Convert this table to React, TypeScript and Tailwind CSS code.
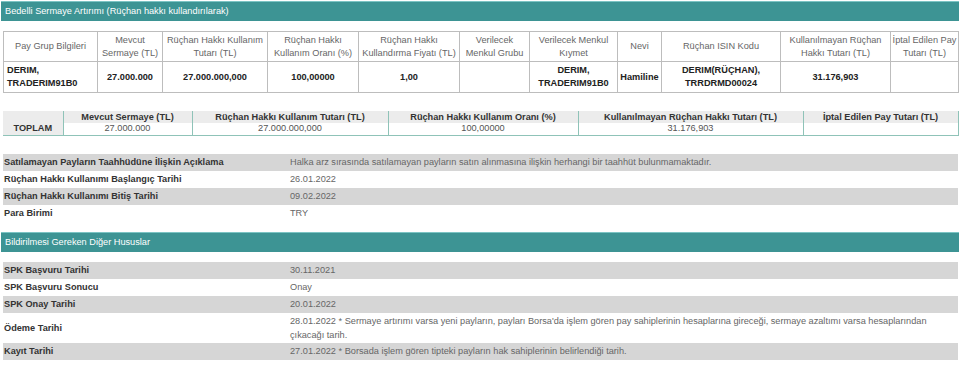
import React from 'react';

const mainHead = [
  { text: 'Pay Grup Bilgileri', w: 'w-[94px]' },
  { text: 'Mevcut Sermaye (TL)', w: 'w-[65px]' },
  { text: 'Rüçhan Hakkı Kullanım Tutarı (TL)', w: 'w-[105px]' },
  { text: 'Rüçhan Hakkı Kullanım Oranı (%)', w: 'w-[91px]' },
  { text: 'Rüçhan Hakkı Kullandırma Fiyatı (TL)', w: 'w-[101px]' },
  { text: 'Verilecek Menkul Grubu', w: 'w-[70px]' },
  { text: 'Verilecek Menkul Kıymet', w: 'w-[88px]' },
  { text: 'Nevi', w: 'w-[44px]' },
  { text: 'Rüçhan ISIN Kodu', w: 'w-[119px]' },
  { text: 'Kullanılmayan Rüçhan Hakkı Tutarı (TL)', w: 'w-[110px]' },
  { text: 'İptal Edilen Pay Tutarı (TL)', w: 'w-[68px]' },
];

const mainRow = [
  'DERIM, TRADERIM91B0',
  '27.000.000',
  '27.000.000,000',
  '100,00000',
  '1,00',
  '',
  'DERIM, TRADERIM91B0',
  'Hamiline',
  'DERIM(RÜÇHAN), TRRDRMD00024',
  '31.176,903',
  '',
];

const totals = [
  { head: 'Mevcut Sermaye (TL)', val: '27.000.000', w: 'w-[129px]' },
  { head: 'Rüçhan Hakkı Kullanım Tutarı (TL)', val: '27.000.000,000', w: 'w-[196px]' },
  { head: 'Rüçhan Hakkı Kullanım Oranı (%)', val: '100,00000', w: 'w-[190px]' },
  { head: 'Kullanılmayan Rüçhan Hakkı Tutarı (TL)', val: '31.176,903', w: 'w-[225px]' },
  { head: 'İptal Edilen Pay Tutarı (TL)', val: '', w: 'w-[155px]' },
];

const info = [
  { k: 'Satılamayan Payların Taahhüdüne İlişkin Açıklama', v: 'Halka arz sırasında satılamayan payların satın alınmasına ilişkin herhangi bir taahhüt bulunmamaktadır.' },
  { k: 'Rüçhan Hakkı Kullanımı Başlangıç Tarihi', v: '26.01.2022' },
  { k: 'Rüçhan Hakkı Kullanımı Bitiş Tarihi', v: '09.02.2022' },
  { k: 'Para Birimi', v: 'TRY' },
];

const other = [
  { k: 'SPK Başvuru Tarihi', v: '30.11.2021' },
  { k: 'SPK Başvuru Sonucu', v: 'Onay' },
  { k: 'SPK Onay Tarihi', v: '20.01.2022' },
  { k: 'Ödeme Tarihi', v: "28.01.2022 * Sermaye artırımı varsa yeni payların, payları Borsa'da işlem gören pay sahiplerinin hesaplarına gireceği, sermaye azaltımı varsa hesaplarından çıkacağı tarih." },
  { k: 'Kayıt Tarihi', v: '27.01.2022 * Borsada işlem gören tipteki payların hak sahiplerinin belirlendiği tarih.' },
];

const SectionBar = ({ title }: { title: string }) => (
  <div className="h-[20px] bg-[#3d9494] border-t border-[#7cc4c4] pl-[4px] text-[9.2px] leading-[18px] text-white">
    {title}
  </div>
);

const KeyValue = ({ rows }: { rows: { k: string; v: string }[] }) => (
  <table className="ml-[2px] w-[955px] table-fixed border-collapse text-[9.2px]">
    <colgroup>
      <col className="w-[286px]" />
      <col />
    </colgroup>
    <tbody>
      {rows.map((r, i) => (
        <tr key={r.k} className={i % 2 === 0 ? 'bg-[#d6d6d6]' : 'bg-white'}>
          <td className="h-[17px] py-[1px] pl-[1px] pr-[2px] font-bold text-[#333] leading-[14px] align-middle">{r.k}</td>
          <td className="py-[1px] pl-[1px] pr-[18px] text-[#666] leading-[14px] align-middle">{r.v}</td>
        </tr>
      ))}
    </tbody>
  </table>
);

export default function App() {
  return (
    <div className="w-[960px] bg-white px-[1px] pt-[1px] font-['Liberation_Sans',Arial,sans-serif]">
      <SectionBar title="Bedelli Sermaye Artırımı (Rüçhan hakkı kullandırılarak)" />

      <table className="mt-[10px] ml-[2px] w-[955px] table-fixed border-collapse text-[9.2px]">
        <colgroup>
          {mainHead.map((h) => (
            <col key={h.text} className={h.w} />
          ))}
        </colgroup>
        <thead>
          <tr>
            {mainHead.map((h) => (
              <th key={h.text} className="h-[30px] border border-[#bdbdbd] px-[1px] font-normal text-[#666] leading-[13px] text-center align-middle">
                {h.text}
              </th>
            ))}
          </tr>
        </thead>
        <tbody>
          <tr>
            {mainRow.map((c, i) => (
              <td
                key={i}
                className={
                  i === 0
                    ? 'h-[31px] border border-[#bdbdbd] px-[3px] font-bold text-[#222] leading-[13px] text-left align-middle'
                    : 'h-[31px] border border-[#bdbdbd] px-[1px] font-bold text-[#222] leading-[13px] text-center align-middle'
                }
              >
                {c}
              </td>
            ))}
          </tr>
        </tbody>
      </table>

      <table className="mt-[18px] ml-[2px] w-[955px] table-fixed border-collapse text-[9.2px]">
        <colgroup>
          <col className="w-[60px]" />
          {totals.map((t) => (
            <col key={t.head} className={t.w} />
          ))}
        </colgroup>
        <tbody>
          <tr className="bg-[#ececec]">
            <td className="h-[12px] p-0 border-r border-[#8fc3b8]" />
            {totals.map((t) => (
              <td key={t.head} className="h-[12px] p-0 border-x border-[#8fc3b8] font-bold text-[#333] leading-[11px] text-center">
                {t.head}
              </td>
            ))}
          </tr>
          <tr className="border-b border-[#8fc3b8]">
            <td className="h-[12px] p-0 bg-[#ececec] border-r border-[#8fc3b8] font-bold text-[#333] leading-[11px] text-center">TOPLAM</td>
            {totals.map((t) => (
              <td key={t.head} className="h-[12px] p-0 border-x border-[#8fc3b8] text-[#555] leading-[11px] text-center">
                {t.val}
              </td>
            ))}
          </tr>
        </tbody>
      </table>

      <div className="mt-[18px]">
        <KeyValue rows={info} />
      </div>

      <div className="mt-[10px]">
        <SectionBar title="Bildirilmesi Gereken Diğer Hususlar" />
      </div>

      <div className="mt-[10px] pb-[10px]">
        <KeyValue rows={other} />
      </div>
    </div>
  );
}
